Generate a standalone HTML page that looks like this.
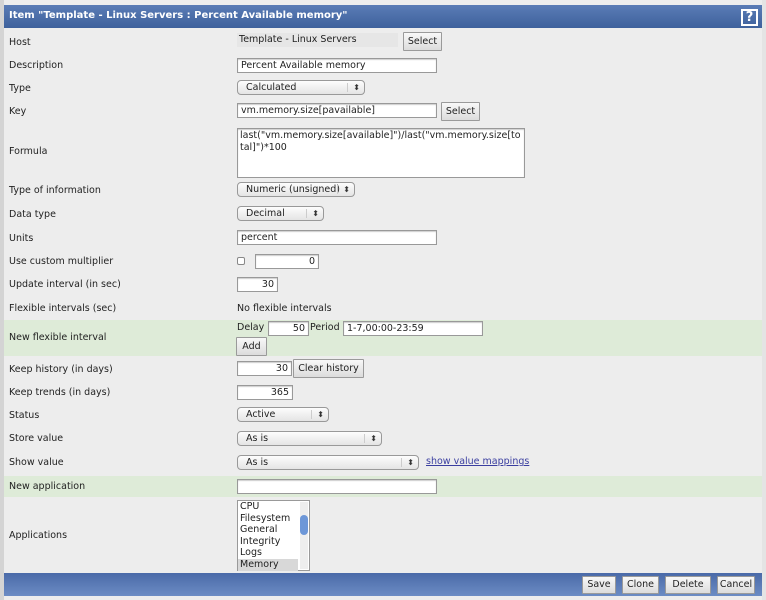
<!DOCTYPE html>
<html><head><style>
*{box-sizing:border-box}
body{margin:0;width:766px;height:600px;background:#ededed;font-family:"DejaVu Sans","Liberation Sans",sans-serif;font-size:9.5px;color:#222;position:relative;overflow:hidden}
.a{position:absolute;white-space:nowrap}
.lbl{position:absolute;left:9px;line-height:12px;margin-top:1px}
.in{position:absolute;background:#fff;border:1px solid #999;box-shadow:inset 0 1px 1px #ccc;height:15px;padding:0 3px;line-height:13px;font-size:9.5px}
.r{text-align:right}
.btn{position:absolute;background:linear-gradient(#f8f8f8,#dcdcdc);border:1px solid #9a9a9a;text-align:center;line-height:17px;height:19px;font-size:9.5px;border-radius:1px}
.sel{position:absolute;background:linear-gradient(#fdfdfd,#e4e4e4);border:1px solid #999;border-radius:4px;height:15px;line-height:13px;padding-left:8px;font-size:9.5px}
.sel:after{content:"⬍";position:absolute;right:4px;top:0;font-size:8px;color:#333}
.sel:before{content:"";position:absolute;right:16px;top:2px;height:9px;border-left:1px solid #ccc}
.green{position:absolute;left:4px;right:4px;background:#deebd8}
</style></head><body>
<div class="a" style="left:0;top:0;width:4px;height:600px;background:#d4d4d4"></div>
<div class="a" style="left:762px;top:0;width:4px;height:600px;background:#e4e4e4"></div>
<div class="a" style="left:4px;top:5px;width:758px;height:23px;background:linear-gradient(#5a7cb6,#3e619c);"></div>
<div class="a" style="left:9px;top:10px;color:#fff;font-weight:bold;font-size:10px">Item "Template - Linux Servers : Percent Available memory"</div>
<div class="a" style="left:741px;top:9px;width:17px;height:17px;border:2px solid #fff;color:#fff;font-weight:bold;font-size:13px;line-height:13px;text-align:center">?</div>

<div class="green" style="top:320px;height:36px"></div>
<div class="green" style="top:476px;height:21px"></div>

<div class="lbl" style="top:36px">Host</div>
<div class="lbl" style="top:59px">Description</div>
<div class="lbl" style="top:82px">Type</div>
<div class="lbl" style="top:105px">Key</div>
<div class="lbl" style="top:145px">Formula</div>
<div class="lbl" style="top:184px">Type of information</div>
<div class="lbl" style="top:208px">Data type</div>
<div class="lbl" style="top:232px">Units</div>
<div class="lbl" style="top:255px">Use custom multiplier</div>
<div class="lbl" style="top:278px">Update interval (in sec)</div>
<div class="lbl" style="top:302px">Flexible intervals (sec)</div>
<div class="lbl" style="top:331px">New flexible interval</div>
<div class="lbl" style="top:363px">Keep history (in days)</div>
<div class="lbl" style="top:386px">Keep trends (in days)</div>
<div class="lbl" style="top:409px">Status</div>
<div class="lbl" style="top:432px">Store value</div>
<div class="lbl" style="top:456px">Show value</div>
<div class="lbl" style="top:480px">New application</div>
<div class="lbl" style="top:529px">Applications</div>

<div class="a" style="left:237px;top:33px;width:161px;height:14px;background:#e6e6e6;padding-left:2px;line-height:14px">Template - Linux Servers</div>
<div class="btn" style="left:403px;top:32px;width:39px">Select</div>
<div class="in" style="left:237px;top:58px;width:200px">Percent Available memory</div>
<div class="sel" style="left:237px;top:80px;width:128px">Calculated</div>
<div class="in" style="left:237px;top:103px;width:200px">vm.memory.size[pavailable]</div>
<div class="btn" style="left:441px;top:102px;width:39px">Select</div>
<div class="in" style="left:237px;top:128px;width:288px;height:50px;white-space:normal;line-height:12px;padding:1px 2px;word-break:break-all">last("vm.memory.size[available]")/last("vm.memory.size[total]")*100</div>
<div class="sel" style="left:237px;top:182px;width:118px">Numeric (unsigned)</div>
<div class="sel" style="left:237px;top:206px;width:87px">Decimal</div>
<div class="in" style="left:237px;top:230px;width:200px">percent</div>
<div class="a" style="left:237px;top:257px;width:8px;height:8px;border:1px solid #888;border-radius:2px;background:#fff"></div>
<div class="in r" style="left:255px;top:254px;width:64px">0</div>
<div class="in r" style="left:237px;top:277px;width:41px">30</div>
<div class="a" style="left:237px;top:303px">No flexible intervals</div>
<div class="a" style="left:237px;top:322px">Delay</div>
<div class="in r" style="left:268px;top:321px;width:41px">50</div>
<div class="a" style="left:310px;top:322px">Period</div>
<div class="in" style="left:343px;top:321px;width:140px">1-7,00:00-23:59</div>
<div class="btn" style="left:236px;top:337px;width:31px">Add</div>
<div class="in r" style="left:237px;top:361px;width:55px">30</div>
<div class="btn" style="left:293px;top:359px;width:71px">Clear history</div>
<div class="in r" style="left:237px;top:385px;width:56px">365</div>
<div class="sel" style="left:237px;top:407px;width:92px">Active</div>
<div class="sel" style="left:237px;top:431px;width:145px">As is</div>
<div class="sel" style="left:237px;top:455px;width:182px">As is</div>
<div class="a" style="left:426px;top:456px;color:#3a3ea0;text-decoration:underline">show value mappings</div>
<div class="in" style="left:237px;top:479px;width:200px"></div>
<div class="a" style="left:237px;top:500px;width:73px;height:71px;background:#fff;border:1px solid #999;line-height:11.6px;padding-left:2px">CPU<br>Filesystem<br>General<br>Integrity<br>Logs<br><span style="background:#d8d8d8;display:inline-block;width:60px;margin-left:-2px;padding-left:2px">Memory</span>
<div class="a" style="right:1px;top:1px;width:8px;height:67px;background:#eee"></div>
<div class="a" style="right:1px;top:14px;width:8px;height:20px;background:#6d97d8;border-radius:4px"></div>
</div>

<div class="a" style="left:4px;top:573px;width:758px;height:23px;background:linear-gradient(#4a6aa8,#6c8cc4)"></div>
<div class="btn" style="left:582px;top:576px;width:34px;height:18px;line-height:16px">Save</div>
<div class="btn" style="left:622px;top:576px;width:37px;height:18px;line-height:16px">Clone</div>
<div class="btn" style="left:665px;top:576px;width:46px;height:18px;line-height:16px">Delete</div>
<div class="btn" style="left:717px;top:576px;width:38px;height:18px;line-height:16px">Cancel</div>
</body></html>
